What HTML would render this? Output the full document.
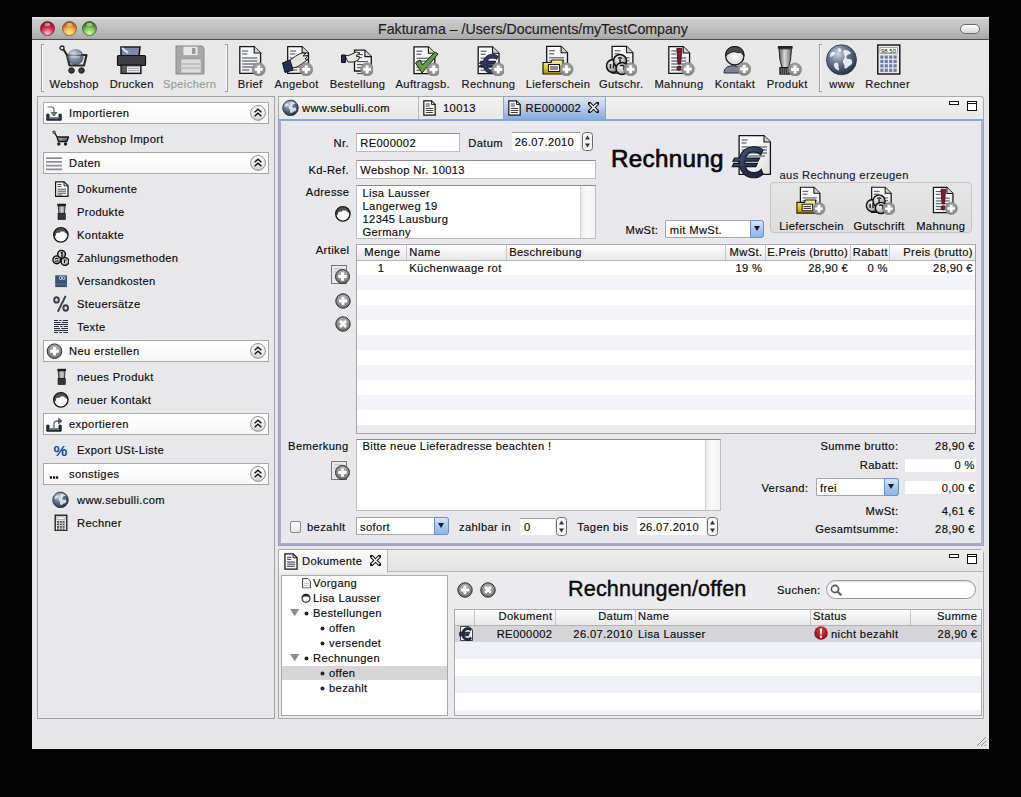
<!DOCTYPE html>
<html><head><meta charset="utf-8"><style>
*{box-sizing:border-box;margin:0;padding:0}
html,body{width:1021px;height:797px;overflow:hidden;background:#040404;font-family:"Liberation Sans",sans-serif;color:#141414}
.a{position:absolute}
.t{position:absolute;white-space:nowrap;line-height:1;-webkit-text-stroke:0.15px currentColor}
svg{overflow:visible}
</style></head><body>
<svg width="0" height="0" style="position:absolute"><defs>
<radialGradient id="g_red" cx="50%" cy="85%" r="75%"><stop offset="0" stop-color="#f8d0d8"/><stop offset=".55" stop-color="#e03050"/><stop offset="1" stop-color="#8a1020"/></radialGradient>
<radialGradient id="g_yel" cx="50%" cy="85%" r="75%"><stop offset="0" stop-color="#fff090"/><stop offset=".55" stop-color="#f0b040"/><stop offset="1" stop-color="#9a5a10"/></radialGradient>
<radialGradient id="g_grn" cx="50%" cy="85%" r="75%"><stop offset="0" stop-color="#e0f8c8"/><stop offset=".55" stop-color="#80c050"/><stop offset="1" stop-color="#3a6a20"/></radialGradient>
<linearGradient id="g_paper" x1="0" y1="0" x2="1" y2="1"><stop offset="0" stop-color="#ffffff"/><stop offset=".6" stop-color="#f2f2f2"/><stop offset="1" stop-color="#dcdcdc"/></linearGradient>
<radialGradient id="g_badge" cx="50%" cy="40%" r="60%"><stop offset="0" stop-color="#b4b4b4"/><stop offset="1" stop-color="#808080"/></radialGradient>
<radialGradient id="g_globe" cx="38%" cy="30%" r="72%"><stop offset="0" stop-color="#d0d8e4"/><stop offset=".45" stop-color="#6a7a94"/><stop offset="1" stop-color="#263046"/></radialGradient>
<radialGradient id="g_circ" cx="50%" cy="35%" r="65%"><stop offset="0" stop-color="#c4c4c4"/><stop offset="1" stop-color="#6a6a6a"/></radialGradient>
<linearGradient id="g_steel" x1="0" y1="0" x2="1" y2="0"><stop offset="0" stop-color="#5a5a5a"/><stop offset=".45" stop-color="#d8d8d8"/><stop offset="1" stop-color="#6a6a6a"/></linearGradient>
<linearGradient id="g_steel2" x1="0" y1="0" x2="1" y2="0"><stop offset="0" stop-color="#6a6a6a"/><stop offset=".5" stop-color="#d0d0d0"/><stop offset="1" stop-color="#8a8a8a"/></linearGradient>
<linearGradient id="g_euro" x1="0" y1="0" x2="1" y2="1"><stop offset="0" stop-color="#55607c"/><stop offset=".5" stop-color="#2e3a58"/><stop offset="1" stop-color="#1a2238"/></linearGradient>
<radialGradient id="g_coin" cx="40%" cy="35%" r="70%"><stop offset="0" stop-color="#f6f6f6"/><stop offset=".6" stop-color="#bcbcbc"/><stop offset="1" stop-color="#6a6a6a"/></radialGradient>
<linearGradient id="g_cart" x1="0" y1="0" x2="1" y2="1"><stop offset="0" stop-color="#f2f2f2"/><stop offset="1" stop-color="#4a4a4a"/></linearGradient>
<linearGradient id="g_folder" x1="0" y1="0" x2="0" y2="1"><stop offset="0" stop-color="#fff2a0"/><stop offset=".6" stop-color="#e8c020"/><stop offset="1" stop-color="#a88a10"/></linearGradient>
<radialGradient id="g_face" cx="50%" cy="55%" r="60%"><stop offset="0" stop-color="#ffffff"/><stop offset="1" stop-color="#c8c8c8"/></radialGradient>
<radialGradient id="g_redc" cx="50%" cy="35%" r="65%"><stop offset="0" stop-color="#e04040"/><stop offset="1" stop-color="#8a0a10"/></radialGradient>

<symbol id="tl_red" viewBox="0 0 15 15"><circle cx="7.5" cy="7.5" r="7" fill="url(#g_red)" stroke="#6a2030" stroke-width=".7"/><ellipse cx="7.5" cy="3.4" rx="3" ry="1.6" fill="#fff" opacity=".45"/></symbol>
<symbol id="tl_yel" viewBox="0 0 15 15"><circle cx="7.5" cy="7.5" r="7" fill="url(#g_yel)" stroke="#7a4a10" stroke-width=".7"/><ellipse cx="7.5" cy="3.4" rx="3" ry="1.6" fill="#fff" opacity=".45"/></symbol>
<symbol id="tl_grn" viewBox="0 0 15 15"><circle cx="7.5" cy="7.5" r="7" fill="url(#g_grn)" stroke="#2a5a1a" stroke-width=".7"/><ellipse cx="7.5" cy="3.4" rx="3" ry="1.6" fill="#fff" opacity=".45"/></symbol>

<!-- toolbar 32x32 -->
<symbol id="tb_cart" viewBox="0 0 32 32">
 <circle cx="4" cy="4" r="2" fill="none" stroke="#222" stroke-width="1.3"/>
 <path d="M5.5 5.5L9 11H28.5L26 21.5H11.5L9 11" fill="none" stroke="#2a2a2a" stroke-width="2.2" stroke-linejoin="round"/>
 <circle cx="17.5" cy="13" r="8" fill="url(#g_globe)" opacity=".75"/>
 <path d="M12 10h11M13 13h9" stroke="#d8e0ea" stroke-width="1.2" opacity=".8"/>
 <circle cx="13.5" cy="26.5" r="2.8" fill="#3a3a3a" stroke="#222"/><circle cx="23.5" cy="26.5" r="2.8" fill="#3a3a3a" stroke="#222"/>
</symbol>
<symbol id="tb_printer" viewBox="0 0 32 32">
 <path d="M5 3H24L23 12H5Z" fill="#8088a8" stroke="#1a1a1a" stroke-width="1.6"/>
 <path d="M6 4L12 9" stroke="#e0e6f4" stroke-width="2"/>
 <rect x="1.5" y="11.5" width="28" height="10" rx="1" fill="#3e3e44" stroke="#111" stroke-width="1.2"/>
 <rect x="5" y="21" width="20" height="8.5" fill="#5a5a62" stroke="#111" stroke-width="1.2"/>
 <rect x="11" y="22.5" width="13" height="6" fill="#e8e8ee"/>
 <path d="M12 24.5h11M12 26.5h11" stroke="#9a9aa8" stroke-width=".8"/>
</symbol>
<symbol id="tb_floppy" viewBox="0 0 32 32">
 <path d="M2 2H28L30 4V30H2Z" fill="#a8a8a8" stroke="#8a8a8a" stroke-width="1"/>
 <rect x="9" y="2.5" width="15" height="9" fill="#e8e8e8" stroke="#999" stroke-width=".6"/>
 <rect x="18" y="4" width="3.5" height="6" fill="#9a9a9a"/>
 <rect x="7" y="15" width="20" height="14" fill="#dcdcdc" stroke="#999" stroke-width=".6"/>
 <path d="M8 20H26M8 24H26" stroke="#a8a8a8" stroke-width="1"/>
</symbol>
<symbol id="tb_brief" viewBox="0 0 32 32"><g transform="translate(5.2,2)"><path d="M0.6 0.6H15L21.4 7V27.4H0.6Z" fill="url(#g_paper)" stroke="#151515" stroke-width="1.3"/><path d="M15 0.6V7H21.4" fill="#cfcfcf" stroke="#151515" stroke-width="1.1"/><path d="M3 5H9" stroke="#4a5262" stroke-width="1.1"/><path d="M3 8H8" stroke="#4a5262" stroke-width="1.1"/><path d="M3 12H18" stroke="#4a5262" stroke-width="1.1"/><path d="M3 15H18" stroke="#4a5262" stroke-width="1.1"/><path d="M3 18H18" stroke="#4a5262" stroke-width="1.1"/><path d="M3 21H16" stroke="#4a5262" stroke-width="1.1"/><path d="M3 24H10" stroke="#4a5262" stroke-width="1.1"/></g><circle cx="24.7" cy="25.4" r="6.6" fill="url(#g_badge)" stroke="#8a8a8a" stroke-width=".6"/><path d="M20.7 25.4H28.7M24.7 21.4V29.4" stroke="#fff" stroke-width="2.8"/></symbol>
<symbol id="tb_angebot" viewBox="0 0 32 32"><g transform="translate(6.1,2)"><path d="M0.6 0.6H15L21.4 7V27.4H0.6Z" fill="url(#g_paper)" stroke="#151515" stroke-width="1.3"/><path d="M15 0.6V7H21.4" fill="#cfcfcf" stroke="#151515" stroke-width="1.1"/><path d="M3 5H9" stroke="#4a5262" stroke-width="1.1"/><path d="M3 8H8" stroke="#4a5262" stroke-width="1.1"/><path d="M3 12H18" stroke="#4a5262" stroke-width="1.1"/><path d="M3 15H18" stroke="#4a5262" stroke-width="1.1"/><path d="M3 18H18" stroke="#4a5262" stroke-width="1.1"/><path d="M3 21H16" stroke="#4a5262" stroke-width="1.1"/><path d="M3 24H10" stroke="#4a5262" stroke-width="1.1"/></g>
 <path d="M8 17C12 14 17 10 21 9L25 9.5L22 12L27 11.5L24 15L27 15.5L22 19L16 23L11 24Z" fill="#e6e6e0" stroke="#222" stroke-width="1"/>
 <path d="M1.5 19L9 16L12 26L4 28.5Z" fill="#20305a" stroke="#111" stroke-width="1"/><circle cx="25.2" cy="25.4" r="6.6" fill="url(#g_badge)" stroke="#8a8a8a" stroke-width=".6"/><path d="M21.2 25.4H29.2M25.2 21.4V29.4" stroke="#fff" stroke-width="2.8"/></symbol>
<symbol id="tb_bestell" viewBox="0 0 32 32"><g transform="translate(12.9,5.6)"><path d="M0.6 0.6H11L17.4 7V21.4H0.6Z" fill="url(#g_paper)" stroke="#151515" stroke-width="1.3"/><path d="M11 0.6V7H17.4" fill="#cfcfcf" stroke="#151515" stroke-width="1.1"/><path d="M3 5H9" stroke="#4a5262" stroke-width="1.1"/><path d="M3 8H8" stroke="#4a5262" stroke-width="1.1"/><path d="M3 12H14" stroke="#4a5262" stroke-width="1.1"/><path d="M3 15H14" stroke="#4a5262" stroke-width="1.1"/><path d="M3 18H14" stroke="#4a5262" stroke-width="1.1"/><path d="M3 21H12" stroke="#4a5262" stroke-width="1.1"/><path d="M3 24H10" stroke="#4a5262" stroke-width="1.1"/></g>
 <path d="M4 12L9 11L15 8L19 9L15 12L19 13L17 16L13 18H7Z" fill="#e6e6e0" stroke="#222" stroke-width="1"/>
 <path d="M0.5 11H4.5V18.5H0.5Z" fill="#20305a" stroke="#111" stroke-width="1"/><circle cx="26.1" cy="25.4" r="6.6" fill="url(#g_badge)" stroke="#8a8a8a" stroke-width=".6"/><path d="M22.1 25.4H30.1M26.1 21.4V29.4" stroke="#fff" stroke-width="2.8"/></symbol>
<symbol id="tb_auftrag" viewBox="0 0 32 32"><g transform="translate(6.4,2.2)"><path d="M0.6 0.6H15L21.4 7V27.4H0.6Z" fill="url(#g_paper)" stroke="#151515" stroke-width="1.3"/><path d="M15 0.6V7H21.4" fill="#cfcfcf" stroke="#151515" stroke-width="1.1"/><path d="M3 5H9" stroke="#4a5262" stroke-width="1.1"/><path d="M3 8H8" stroke="#4a5262" stroke-width="1.1"/><path d="M3 12H18" stroke="#4a5262" stroke-width="1.1"/><path d="M3 15H18" stroke="#4a5262" stroke-width="1.1"/><path d="M3 18H18" stroke="#4a5262" stroke-width="1.1"/><path d="M3 21H16" stroke="#4a5262" stroke-width="1.1"/><path d="M3 24H10" stroke="#4a5262" stroke-width="1.1"/></g>
 <path d="M8.5 19L13 16L15.5 21L28 8L31 10L15 29Z" fill="#6a9a48" stroke="#1a2a10" stroke-width="1"/><circle cx="26.6" cy="25.5" r="6.6" fill="url(#g_badge)" stroke="#8a8a8a" stroke-width=".6"/><path d="M22.6 25.5H30.6M26.6 21.5V29.5" stroke="#fff" stroke-width="2.8"/></symbol>
<symbol id="tb_rechnung" viewBox="0 0 32 32"><g transform="translate(5.6,2.2)"><path d="M0.6 0.6H15L21.4 7V27.4H0.6Z" fill="url(#g_paper)" stroke="#151515" stroke-width="1.3"/><path d="M15 0.6V7H21.4" fill="#cfcfcf" stroke="#151515" stroke-width="1.1"/><path d="M3 5H9" stroke="#4a5262" stroke-width="1.1"/><path d="M3 8H8" stroke="#4a5262" stroke-width="1.1"/><path d="M3 12H18" stroke="#4a5262" stroke-width="1.1"/><path d="M3 15H18" stroke="#4a5262" stroke-width="1.1"/><path d="M3 18H18" stroke="#4a5262" stroke-width="1.1"/><path d="M3 21H16" stroke="#4a5262" stroke-width="1.1"/><path d="M3 24H10" stroke="#4a5262" stroke-width="1.1"/></g>
 <path d="M26 12.5C24.5 11 22.5 10.3 20.5 10.3C15.5 10.3 12 13.8 11.3 17.5H8.5L7.5 19.5H11.2V21H8L7 23H11.5C12.5 26.8 15.5 29.5 20 29.5C22.5 29.5 24.5 28.5 26 27L25 24C24 25.5 22.3 26.2 20.5 26.2C17.7 26.2 15.8 24.8 15.2 23H21.5L22.5 21H14.9V19.5H22.8L23.8 17.5H15.3C16 15.2 18 13.6 20.5 13.6C22.2 13.6 23.6 14.3 24.7 15.5Z" fill="#2a3a5e" stroke="#0e1424" stroke-width=".8"/><circle cx="26.2" cy="25.5" r="6.6" fill="url(#g_badge)" stroke="#8a8a8a" stroke-width=".6"/><path d="M22.2 25.5H30.2M26.2 21.5V29.5" stroke="#fff" stroke-width="2.8"/></symbol>
<symbol id="tb_liefer" viewBox="0 0 32 32"><g transform="translate(4.1,1.8)"><path d="M0.6 0.6H15L21.4 7V27.4H0.6Z" fill="url(#g_paper)" stroke="#151515" stroke-width="1.3"/><path d="M15 0.6V7H21.4" fill="#cfcfcf" stroke="#151515" stroke-width="1.1"/><path d="M3 5H9" stroke="#4a5262" stroke-width="1.1"/><path d="M3 8H8" stroke="#4a5262" stroke-width="1.1"/><path d="M3 12H18" stroke="#4a5262" stroke-width="1.1"/><path d="M3 15H18" stroke="#4a5262" stroke-width="1.1"/><path d="M3 18H18" stroke="#4a5262" stroke-width="1.1"/><path d="M3 21H16" stroke="#4a5262" stroke-width="1.1"/><path d="M3 24H10" stroke="#4a5262" stroke-width="1.1"/></g>
 <path d="M1 18.5H9L10 16H21V30H1Z" fill="url(#g_folder)" stroke="#1a1a1a" stroke-width="1.2"/>
 <rect x="6.5" y="20.5" width="11" height="7" fill="#f4f4f4" stroke="#111" stroke-width="1"/>
 <path d="M8 23H16M8 25H16" stroke="#111" stroke-width=".9"/><circle cx="24.5" cy="25.3" r="6.6" fill="url(#g_badge)" stroke="#8a8a8a" stroke-width=".6"/><path d="M20.5 25.3H28.5M24.5 21.3V29.3" stroke="#fff" stroke-width="2.8"/></symbol>
<symbol id="tb_gutschr" viewBox="0 0 32 32"><g transform="translate(6.5,1.8)"><path d="M0.6 0.6H15L21.4 7V27.4H0.6Z" fill="url(#g_paper)" stroke="#151515" stroke-width="1.3"/><path d="M15 0.6V7H21.4" fill="#cfcfcf" stroke="#151515" stroke-width="1.1"/><path d="M3 5H9" stroke="#4a5262" stroke-width="1.1"/><path d="M3 8H8" stroke="#4a5262" stroke-width="1.1"/><path d="M3 12H18" stroke="#4a5262" stroke-width="1.1"/><path d="M3 15H18" stroke="#4a5262" stroke-width="1.1"/><path d="M3 18H18" stroke="#4a5262" stroke-width="1.1"/><path d="M3 21H16" stroke="#4a5262" stroke-width="1.1"/><path d="M3 24H10" stroke="#4a5262" stroke-width="1.1"/></g>
 <circle cx="8" cy="22" r="6.5" fill="url(#g_coin)" stroke="#111" stroke-width="1.5"/>
 <circle cx="15" cy="17" r="6.5" fill="url(#g_coin)" stroke="#111" stroke-width="1.5"/>
 <circle cx="17" cy="24.5" r="6" fill="url(#g_coin)" stroke="#111" stroke-width="1.5"/>
 <path d="M13 14.5q2-1.5 4 0M15 15v5M5.5 20v4.5M8.5 19.5v5M15 22q2-1.5 4 0v4" fill="none" stroke="#1a1a1a" stroke-width="1.5"/><circle cx="25.6" cy="25.3" r="6.6" fill="url(#g_badge)" stroke="#8a8a8a" stroke-width=".6"/><path d="M21.6 25.3H29.6M25.6 21.3V29.3" stroke="#fff" stroke-width="2.8"/></symbol>
<symbol id="tb_mahnung" viewBox="0 0 32 32"><g transform="translate(5.2,2)"><path d="M0.6 0.6H15L21.4 7V27.4H0.6Z" fill="url(#g_paper)" stroke="#151515" stroke-width="1.3"/><path d="M15 0.6V7H21.4" fill="#cfcfcf" stroke="#151515" stroke-width="1.1"/><path d="M3 5H9" stroke="#4a5262" stroke-width="1.1"/><path d="M3 8H8" stroke="#4a5262" stroke-width="1.1"/><path d="M3 12H18" stroke="#4a5262" stroke-width="1.1"/><path d="M3 15H18" stroke="#4a5262" stroke-width="1.1"/><path d="M3 18H18" stroke="#4a5262" stroke-width="1.1"/><path d="M3 21H16" stroke="#4a5262" stroke-width="1.1"/><path d="M3 24H10" stroke="#4a5262" stroke-width="1.1"/></g>
 <path d="M13.8 4.5H18.8L17.6 20H15Z" fill="#8a1a2a" stroke="#2a0810" stroke-width=".8"/>
 <circle cx="16.3" cy="24.3" r="2.3" fill="#8a1a2a" stroke="#2a0810" stroke-width=".8"/><circle cx="24.8" cy="25" r="6.6" fill="url(#g_badge)" stroke="#8a8a8a" stroke-width=".6"/><path d="M20.8 25H28.8M24.8 21V29" stroke="#fff" stroke-width="2.8"/></symbol>
<symbol id="tb_kontakt" viewBox="0 0 32 32">
 <path d="M5 29C5 24.5 8 21.8 14 21.8C19.5 21.8 23 24.5 23 29Z" fill="#7c8498" stroke="#2a2e3a" stroke-width="1"/>
 <circle cx="15.8" cy="11.8" r="9.2" fill="url(#g_face)" stroke="#1a1a1a" stroke-width="1.3"/>
 <path d="M6.8 12C6.5 6 10 2.6 15.8 2.6C21.5 2.6 25.2 6 24.8 12C23 8.5 21 7.8 19 8.8C16 6.8 11 7.5 6.8 12Z" fill="#4a4a4a" stroke="#1a1a1a" stroke-width="1"/><circle cx="25.2" cy="25" r="6.6" fill="url(#g_badge)" stroke="#8a8a8a" stroke-width=".6"/><path d="M21.2 25H29.2M25.2 21V29" stroke="#fff" stroke-width="2.8"/></symbol>
<symbol id="tb_produkt" viewBox="0 0 32 32">
 <rect x="6.8" y="2" width="14.8" height="2.8" fill="#222"/>
 <path d="M8 4.8H20.5L19.5 16L17.5 23.5H11L9 16Z" fill="url(#g_steel)" stroke="#222" stroke-width="1"/>
 <rect x="8.8" y="23.4" width="10.5" height="6.8" fill="#3a3a3a" stroke="#111" stroke-width=".8"/>
 <path d="M10.5 24v6M12.5 24v6M14.5 24v6M16.5 24v6" stroke="#777" stroke-width=".7"/><circle cx="24" cy="25.5" r="6.6" fill="url(#g_badge)" stroke="#8a8a8a" stroke-width=".6"/><path d="M20 25.5H28M24 21.5V29.5" stroke="#fff" stroke-width="2.8"/></symbol>
<symbol id="tb_www" viewBox="0 0 32 32">
 <circle cx="15.5" cy="15.8" r="15" fill="url(#g_globe)" stroke="#2a3244" stroke-width=".8"/>
 <path d="M5 9C7 7 9.5 7.5 9 10C8 12 5.5 11.5 4.5 13.5C4 12 4.2 10.5 5 9ZM12 4.5C14 4 16 5 15 7C14 8.5 12 8 11.5 6.5ZM18 6C21 5.5 24 7 25 9.5C23 10.5 21.5 10 20.5 12C19.5 13.5 21 15.5 23 15C25 14.5 27 17 26 19.5C25 22 22.5 21.5 21.5 23.5C20.5 25 18 25 18.5 22.5C19 20.5 16.5 19.5 17 17C17.5 15 19.5 14 18.5 11.5C18 9.5 16.5 8 18 6ZM9 19C11 18 13 19.5 12.5 21.5C12 23.5 14 25 12.5 26.5C10.5 26 8.5 24 8 22C7.8 20.5 8 19.5 9 19Z" fill="#f2f5fa" opacity=".92"/>
</symbol>
<symbol id="tb_rechner" viewBox="0 0 32 32">
 <rect x="5.8" y="1" width="22" height="29" fill="#e8eaee" stroke="#111" stroke-width="1.4"/>
 <rect x="8" y="3.5" width="17.5" height="6" fill="#f8f8f8" stroke="#777" stroke-width=".6"/>
 <text x="24" y="8.6" font-size="6" text-anchor="end" font-family="Liberation Sans" fill="#222">98.50</text>
 <g fill="#5a6a96" opacity=".85"><rect x="8.3" y="11.5" width="3.2" height="3.2"/><rect x="12.700000000000001" y="11.5" width="3.2" height="3.2"/><rect x="17.1" y="11.5" width="3.2" height="3.2"/><rect x="21.5" y="11.5" width="3.2" height="3.2"/><rect x="8.3" y="15.9" width="3.2" height="3.2"/><rect x="12.700000000000001" y="15.9" width="3.2" height="3.2"/><rect x="17.1" y="15.9" width="3.2" height="3.2"/><rect x="21.5" y="15.9" width="3.2" height="3.2"/><rect x="8.3" y="20.3" width="3.2" height="3.2"/><rect x="12.700000000000001" y="20.3" width="3.2" height="3.2"/><rect x="17.1" y="20.3" width="3.2" height="3.2"/><rect x="21.5" y="20.3" width="3.2" height="3.2"/><rect x="8.3" y="24.700000000000003" width="3.2" height="3.2"/><rect x="12.700000000000001" y="24.700000000000003" width="3.2" height="3.2"/><rect x="17.1" y="24.700000000000003" width="3.2" height="3.2"/><rect x="21.5" y="24.700000000000003" width="3.2" height="3.2"/></g>
</symbol>

<!-- sidebar 17x17 / 18x16 -->
<symbol id="s_cart" viewBox="0 0 17 17"><circle cx="2" cy="2.2" r="1.2" fill="none" stroke="#111" stroke-width=".9"/><path d="M2.8 3L5 7H16.5L14.8 11.5H6.5L5 7" fill="url(#g_cart)" stroke="#1a1a1a" stroke-width="1.4" stroke-linejoin="round"/><circle cx="6.8" cy="14" r="1.7" fill="#222"/><circle cx="13.5" cy="14" r="1.7" fill="#222"/></symbol>
<symbol id="s_doc" viewBox="0 0 17 17"><path d="M3.6 1.8H12L16 5.8V16.4H3.6Z" fill="#fbfbfb" stroke="#151515" stroke-width="1.2"/><path d="M12 1.8V5.8H16Z" fill="#d0d0d0" stroke="#151515" stroke-width=".9"/><path d="M5.5 4.5h4M5.5 6.5h4M5.5 9.2h8.5M5.5 11.2h8.5M5.5 13.2h8.5M5.5 15h5" stroke="#3a3a3a" stroke-width=".9"/></symbol>
<symbol id="s_prod" viewBox="0 0 17 17"><rect x="5.3" y="0.8" width="8.7" height="2.1" fill="#1a1a1a"/><path d="M6.2 2.9H13.1L12.4 10.4H6.9Z" fill="url(#g_steel2)" stroke="#1a1a1a" stroke-width=".8"/><rect x="6" y="10.4" width="7.3" height="6.2" fill="#34343c" stroke="#111" stroke-width=".6"/></symbol>
<symbol id="s_face" viewBox="0 0 17 17"><circle cx="8.85" cy="8.85" r="7.2" fill="#fbfbfb"/><path d="M1.7 10.2A7.2 7.2 0 1 1 16 10L15 8.6L13.8 6.6L13 7.3L12.2 5.6L8.4 5.4L7.8 7.1L6.4 6.4L4.3 7.3L3.5 10.4Z" fill="#505050"/><circle cx="8.85" cy="8.85" r="7.2" fill="none" stroke="#121212" stroke-width="1.3"/></symbol>
<symbol id="s_coins" viewBox="0 0 17 17"><circle cx="4.8" cy="10.8" r="3.9" fill="url(#g_coin)" stroke="#111" stroke-width="1.4"/><circle cx="13" cy="12.5" r="3.9" fill="url(#g_coin)" stroke="#111" stroke-width="1.4"/><circle cx="9.5" cy="5.3" r="3.9" fill="url(#g_coin)" stroke="#111" stroke-width="1.4"/><path d="M8.6 4.2L10 3.2V7.8" fill="none" stroke="#111" stroke-width="1.3"/><path d="M3 10.2q1.6-1.5 3.2 0M3 12h3.5M11.5 11h3M12.5 11v3" fill="none" stroke="#111" stroke-width="1.1"/></symbol>
<symbol id="s_box" viewBox="0 0 17 17"><rect x="3.2" y="3.3" width="11.8" height="11.8" fill="#3c5272"/><path d="M3.2 12h11.8" stroke="#6a7c98" stroke-width=".6"/><rect x="7.5" y="4.5" width="2.4" height="3" rx="1" fill="none" stroke="#e8ecf4" stroke-width=".9"/><rect x="10.5" y="4.5" width="2.4" height="3" rx="1" fill="none" stroke="#e8ecf4" stroke-width=".9"/></symbol>
<symbol id="s_pct" viewBox="0 0 17 17"><ellipse cx="4.5" cy="4.9" rx="2.3" ry="2.7" fill="none" stroke="#3a3e4a" stroke-width="2"/><ellipse cx="13.7" cy="13" rx="2.3" ry="2.7" fill="none" stroke="#3a3e4a" stroke-width="2"/><path d="M13.6 1L5.8 16.7" stroke="#3a3e4a" stroke-width="1.9"/></symbol>
<symbol id="s_pctb" viewBox="0 0 17 17"><rect x="1" y="2.5" width="15" height="13" fill="#dbe8f6" opacity=".8"/><text x="8.5" y="15.2" font-size="15.5" font-weight="bold" text-anchor="middle" font-family="Liberation Sans" fill="#1e4a96">%</text></symbol>
<symbol id="s_text" viewBox="0 0 17 17"><path d="M2 2.5H6M7.3 2.5H9.5M10.8 2.5H16M2 4.5H8.5M9.8 4.5H16M2 6.5H16M2 8.5H7M8.3 8.5H10.5M11.8 8.5H16M2 10.5H8M9.3 10.5H16M2 12.5H16M2 14.5H6M7.3 14.5H10M11.3 14.5H16" stroke="#262c38" stroke-width="1"/></symbol>
<symbol id="s_globe" viewBox="0 0 17 17"><circle cx="8.5" cy="8.9" r="7.8" fill="url(#g_globe)" stroke="#1e2636" stroke-width=".7"/><path d="M3.5 5C5 4 6.5 4.5 6 6C5 7.5 3.5 7 3 8.5C2.5 7 2.8 6 3.5 5ZM8 3C10 2.5 12.5 3 13.5 4.5C12 5.5 11 5 10.5 6.5C9.5 7.5 11 9.5 12.5 8.5C14 8 15 10 14 11.5C13 13 11 12 10.5 13.5C9.5 14.5 7.5 14 8 12C8.5 10.5 6.5 10 7 8C7.5 6.5 9 6 8 3Z" fill="#e8eef6" opacity=".85"/></symbol>
<symbol id="s_calc" viewBox="0 0 17 17"><rect x="3.2" y="1.2" width="11.6" height="15.6" fill="#e4e4e4" stroke="#151515" stroke-width="1.3"/><rect x="5" y="3" width="8" height="2.5" fill="#fafafa" stroke="#777" stroke-width=".5"/><g fill="#555"><rect x="5.0" y="7.0" width="2" height="1.8"/><rect x="7.8" y="7.0" width="2" height="1.8"/><rect x="10.6" y="7.0" width="2" height="1.8"/><rect x="5.0" y="9.5" width="2" height="1.8"/><rect x="7.8" y="9.5" width="2" height="1.8"/><rect x="10.6" y="9.5" width="2" height="1.8"/><rect x="5.0" y="12.0" width="2" height="1.8"/><rect x="7.8" y="12.0" width="2" height="1.8"/><rect x="10.6" y="12.0" width="2" height="1.8"/><rect x="5.0" y="14.5" width="2" height="1.8"/><rect x="7.8" y="14.5" width="2" height="1.8"/><rect x="10.6" y="14.5" width="2" height="1.8"/></g></symbol>
<symbol id="h_import" viewBox="0 0 18 16"><path d="M0.8 9.2V15.2H15.2V9.2H13V12.8H3V9.2Z" fill="#303a52" stroke="#111" stroke-width=".9"/><path d="M3 13H13" stroke="#8a96b4" stroke-width="1.2"/><path d="M1.5 2H5.5C7.5 2 8 3.5 8 5V8" fill="none" stroke="#667" stroke-width="1.2"/><path d="M5 7.5H11L8 11Z" fill="#6a8a78" stroke="#333" stroke-width=".6"/></symbol>
<symbol id="h_export" viewBox="0 0 18 16"><path d="M0.8 9.2V15.2H15.2V9.2H13V12.8H3V9.2Z" fill="#303a52" stroke="#111" stroke-width=".9"/><path d="M3 13H13" stroke="#8a96b4" stroke-width="1.2"/><path d="M8 12V8C8 6 9.5 5 11.5 5H13" fill="none" stroke="#667" stroke-width="1.3"/><path d="M12.5 2L16 5L12.5 8Z" fill="#556" stroke="#333" stroke-width=".5"/></symbol>
<symbol id="h_daten" viewBox="0 0 18 16"><g stroke="#8c8e96" stroke-width="1.7"><path d="M0 3.2H16M0 6.9H16M0 10.6H16M0 14.3H16"/></g></symbol>
<symbol id="h_neu" viewBox="0 0 18 16"><circle cx="8.5" cy="8.2" r="7.3" fill="url(#g_circ)" stroke="#2e2e2e" stroke-width="1"/><path d="M4.2 8.2H12.8M8.5 3.9V12.5" stroke="#fff" stroke-width="3"/></symbol>
<symbol id="h_sonst" viewBox="0 0 18 16"><g fill="#111"><rect x="3.8" y="10.3" width="2.2" height="2.4"/><rect x="7" y="10.3" width="2.2" height="2.4"/><rect x="10" y="10.3" width="2.2" height="2.4"/></g></symbol>
<symbol id="collapse" viewBox="0 0 16 16"><defs><linearGradient id="g_col" x1="0" y1="0" x2="0" y2="1"><stop offset="0" stop-color="#fafafa"/><stop offset=".6" stop-color="#ececec"/><stop offset="1" stop-color="#cfcfcf"/></linearGradient></defs><circle cx="8" cy="7.9" r="7.4" fill="url(#g_col)" stroke="#8e8e8e" stroke-width="1"/><path d="M4.6 7.2L8 4.2L11.4 7.2M4.6 11.3L8 8.3L11.4 11.3" fill="none" stroke="#111" stroke-width="1.4"/></symbol>

<symbol id="tabdoc" viewBox="0 0 13 16"><path d="M0.8 0.8H8.5L12.2 4.5V15.2H0.8Z" fill="#fbfbfb" stroke="#151515" stroke-width="1.2"/><path d="M8.5 0.8V4.5H12.2Z" fill="#d0d0d0" stroke="#151515" stroke-width=".9"/><path d="M2.8 4h4M2.8 6h4M2.8 8.5h7.5M2.8 10.5h7.5M2.8 12.5h7" stroke="#2a2a2a" stroke-width=".9"/></symbol>
<symbol id="xclose" viewBox="0 0 11 11"><path d="M1.5 1.5L9.5 9.5M9.5 1.5L1.5 9.5" stroke="#111" stroke-width="3.6" stroke-linecap="square"/><path d="M1.8 1.8L9.2 9.2M9.2 1.8L1.8 9.2" stroke="#fff" stroke-width="1.6"/></symbol>
<symbol id="stepper" viewBox="0 0 11 19"><rect x="0.5" y="0.5" width="10" height="18" rx="3" fill="#f6f6f6" stroke="#6a6a6a"/><path d="M3 7.5L5.5 3.5L8 7.5ZM3 11.5L5.5 15.5L8 11.5Z" fill="#333"/></symbol>
<symbol id="docplus" viewBox="0 0 20 20"><rect x="0.5" y="0.5" width="15" height="18" fill="#e8e8e8" stroke="#777" stroke-width="1"/><path d="M3 4h9M3 7h9" stroke="#bbb"/><circle cx="11.5" cy="11.5" r="7" fill="url(#g_circ)" stroke="#2e2e2e" stroke-width="1"/><path d="M7.3 11.5H15.7M11.5 7.3V15.7" stroke="#fff" stroke-width="3"/></symbol>
<symbol id="circplus" viewBox="0 0 16 16"><circle cx="8" cy="8" r="7.2" fill="url(#g_circ)" stroke="#2e2e2e" stroke-width="1"/><path d="M3.8 8H12.2M8 3.8V12.2" stroke="#fff" stroke-width="2.8"/></symbol>
<symbol id="circx" viewBox="0 0 16 16"><circle cx="8" cy="8" r="7.2" fill="url(#g_circ)" stroke="#2e2e2e" stroke-width="1"/><path d="M5 5L11 11M11 5L5 11" stroke="#fff" stroke-width="2.6"/></symbol>
<symbol id="bigeuro" viewBox="0 0 42 46"><g transform="translate(7.5,2)"><path d="M0.6 0.6H25.5L31.9 7V39.4H0.6Z" fill="url(#g_paper)" stroke="#151515" stroke-width="1.3"/><path d="M25.5 0.6V7H31.9" fill="#cfcfcf" stroke="#151515" stroke-width="1.1"/><path d="M3 5H9" stroke="#4a5262" stroke-width="1.1"/><path d="M3 8H8" stroke="#4a5262" stroke-width="1.1"/><path d="M3 12H28.5" stroke="#4a5262" stroke-width="1.1"/><path d="M3 15H28.5" stroke="#4a5262" stroke-width="1.1"/><path d="M3 18H28.5" stroke="#4a5262" stroke-width="1.1"/><path d="M3 21H26.5" stroke="#4a5262" stroke-width="1.1"/><path d="M3 24H10" stroke="#4a5262" stroke-width="1.1"/></g>
 <g transform="translate(1.3,13.8) scale(1.116,1.07) translate(-9.5,-12)"><path d="M37 15C35 13 32 12 29 12C22 12 17 17 16 22.5H11.5L10 25.5H15.7V27.5H10.8L9.5 30.5H16.2C17.5 36.5 22 41 29 41C32.5 41 35 39.5 37 37.5L35.5 33C34 35 31.5 36 29 36C25 36 22 34 21.2 30.5H30.5L32 27.5H20.8V25.5H32.5L34 22.5H21.3C22.2 19 25 16.8 29 16.8C31.5 16.8 33.5 17.8 35 19.5Z" fill="url(#g_euro)" stroke="#0e1424" stroke-width="1"/></g></symbol>
<symbol id="tinydoc" viewBox="0 0 10 12"><path d="M0.6 0.6H6.5L9.4 3.5V11.4H0.6Z" fill="#fff" stroke="#222" stroke-width="1"/><path d="M2.5 6h5M2.5 8.5h5" stroke="#555" stroke-width=".8" stroke-dasharray="1 1"/></symbol>
<symbol id="tinyface" viewBox="0 0 11 12"><circle cx="5.5" cy="6.2" r="4.8" fill="#f4f4f4" stroke="#111" stroke-width="1.3"/><path d="M0.8 6C1 3 3 1.2 5.5 1.2C8 1.2 10 3 10.2 6C9 4.5 7.5 4 5.5 4.2C3.5 4 2 4.5 0.8 6Z" fill="#222"/></symbol>
<symbol id="smalleuro" viewBox="0 0 14 15"><path d="M1.5 0.5H10L13.5 4V14.5H1.5Z" fill="#f4f4f4" stroke="#333" stroke-width=".9"/><g transform="translate(0,1.5) scale(0.45) translate(-9.5,-12)"><path d="M37 15C35 13 32 12 29 12C22 12 17 17 16 22.5H11.5L10 25.5H15.7V27.5H10.8L9.5 30.5H16.2C17.5 36.5 22 41 29 41C32.5 41 35 39.5 37 37.5L35.5 33C34 35 31.5 36 29 36C25 36 22 34 21.2 30.5H30.5L32 27.5H20.8V25.5H32.5L34 22.5H21.3C22.2 19 25 16.8 29 16.8C31.5 16.8 33.5 17.8 35 19.5Z" fill="#1e2a48" stroke="#0e1424" stroke-width="1.5"/></g></symbol>
<symbol id="redexcl" viewBox="0 0 14 14"><circle cx="7" cy="7" r="6.8" fill="url(#g_redc)"/><path d="M5.8 2.5H8.2L7.7 8.5H6.3Z" fill="#fff"/><circle cx="7" cy="10.8" r="1.2" fill="#fff"/></symbol>
</defs></svg>
<div class="a" style="left:32px;top:17px;width:957px;height:732px;background:#e7e6e9"></div>
<div class="a" style="left:32px;top:17px;width:957px;height:23px;background:linear-gradient(#cdcdcd,#bdbdbd 50%,#a9a9a9);border-bottom:1px solid #4a4a4a;border-top:2px solid #dedede"></div>
<div class="t" style="left:378px;top:22.00px;font-size:14.2px;color:#1e1e1e;">Fakturama – /Users/Documents/myTestCompany</div>
<svg class="a" style="left:40.2px;top:21.2px;" width="15" height="15" viewBox="0 0 15 15"><use href="#tl_red"/></svg>
<svg class="a" style="left:61.5px;top:21.2px;" width="15" height="15" viewBox="0 0 15 15"><use href="#tl_yel"/></svg>
<svg class="a" style="left:82.4px;top:21.2px;" width="15" height="15" viewBox="0 0 15 15"><use href="#tl_grn"/></svg>
<div class="a" style="left:960px;top:24px;width:20px;height:10px;border:1px solid #6d6d6d;border-radius:5px;background:linear-gradient(#fdfdfd,#d8d8d8)"></div>
<div class="a" style="left:32px;top:40px;width:957px;height:55px;background:#e8e8e8"></div>
<div class="a" style="left:41px;top:44px;width:3px;height:48px;border-left:1px solid #9b9b9b;border-top:1px solid #9b9b9b;border-bottom:1px solid #9b9b9b;box-shadow:inset 1px 0 0 #fbfbfb"></div>
<div class="a" style="left:819px;top:44px;width:3px;height:48px;border-left:1px solid #9b9b9b;border-top:1px solid #9b9b9b;border-bottom:1px solid #9b9b9b;box-shadow:inset 1px 0 0 #fbfbfb"></div>
<div class="a" style="left:225px;top:44px;width:3px;height:48px;border-right:1px solid #9b9b9b;border-top:1px solid #9b9b9b;border-bottom:1px solid #9b9b9b;box-shadow:inset -1px 0 0 #fbfbfb"></div>
<div class="t" style="left:-225.82px;width:600px;text-align:center;top:79.00px;font-size:11.2px;color:#151515;letter-spacing:0.35px;">Webshop</div>
<svg class="a" style="left:58px;top:44px;" width="32" height="32" viewBox="0 0 32 32"><use href="#tb_cart"/></svg>
<div class="t" style="left:-168.32px;width:600px;text-align:center;top:79.00px;font-size:11.2px;color:#151515;letter-spacing:0.35px;">Drucken</div>
<svg class="a" style="left:115.5px;top:44px;" width="32" height="32" viewBox="0 0 32 32"><use href="#tb_printer"/></svg>
<div class="t" style="left:-110.33px;width:600px;text-align:center;top:79.00px;font-size:11.2px;color:#9a9a9a;letter-spacing:0.35px;">Speichern</div>
<svg class="a" style="left:173.5px;top:44px;" width="32" height="32" viewBox="0 0 32 32"><use href="#tb_floppy"/></svg>
<div class="t" style="left:-49.83px;width:600px;text-align:center;top:79.00px;font-size:11.2px;color:#151515;letter-spacing:0.35px;">Brief</div>
<svg class="a" style="left:234px;top:44px;" width="32" height="32" viewBox="0 0 32 32"><use href="#tb_brief"/></svg>
<div class="t" style="left:-3.33px;width:600px;text-align:center;top:79.00px;font-size:11.2px;color:#151515;letter-spacing:0.35px;">Angebot</div>
<svg class="a" style="left:280.5px;top:44px;" width="32" height="32" viewBox="0 0 32 32"><use href="#tb_angebot"/></svg>
<div class="t" style="left:57.57px;width:600px;text-align:center;top:79.00px;font-size:11.2px;color:#151515;letter-spacing:0.35px;">Bestellung</div>
<svg class="a" style="left:341.4px;top:44px;" width="32" height="32" viewBox="0 0 32 32"><use href="#tb_bestell"/></svg>
<div class="t" style="left:122.78px;width:600px;text-align:center;top:79.00px;font-size:11.2px;color:#151515;letter-spacing:0.35px;">Auftragsb.</div>
<svg class="a" style="left:406.6px;top:44px;" width="32" height="32" viewBox="0 0 32 32"><use href="#tb_auftrag"/></svg>
<div class="t" style="left:188.38px;width:600px;text-align:center;top:79.00px;font-size:11.2px;color:#151515;letter-spacing:0.35px;">Rechnung</div>
<svg class="a" style="left:472.2px;top:44px;" width="32" height="32" viewBox="0 0 32 32"><use href="#tb_rechnung"/></svg>
<div class="t" style="left:257.97px;width:600px;text-align:center;top:79.00px;font-size:11.2px;color:#151515;letter-spacing:0.35px;">Lieferschein</div>
<svg class="a" style="left:541.8px;top:44px;" width="32" height="32" viewBox="0 0 32 32"><use href="#tb_liefer"/></svg>
<div class="t" style="left:321.18px;width:600px;text-align:center;top:79.00px;font-size:11.2px;color:#151515;letter-spacing:0.35px;">Gutschr.</div>
<svg class="a" style="left:605px;top:44px;" width="32" height="32" viewBox="0 0 32 32"><use href="#tb_gutschr"/></svg>
<div class="t" style="left:378.97px;width:600px;text-align:center;top:79.00px;font-size:11.2px;color:#151515;letter-spacing:0.35px;">Mahnung</div>
<svg class="a" style="left:662.8px;top:44px;" width="32" height="32" viewBox="0 0 32 32"><use href="#tb_mahnung"/></svg>
<div class="t" style="left:434.97px;width:600px;text-align:center;top:79.00px;font-size:11.2px;color:#151515;letter-spacing:0.35px;">Kontakt</div>
<svg class="a" style="left:718.8px;top:44px;" width="32" height="32" viewBox="0 0 32 32"><use href="#tb_kontakt"/></svg>
<div class="t" style="left:487.18px;width:600px;text-align:center;top:79.00px;font-size:11.2px;color:#151515;letter-spacing:0.35px;">Produkt</div>
<svg class="a" style="left:771px;top:44px;" width="32" height="32" viewBox="0 0 32 32"><use href="#tb_produkt"/></svg>
<div class="t" style="left:541.97px;width:600px;text-align:center;top:79.00px;font-size:11.2px;color:#151515;letter-spacing:0.35px;">www</div>
<svg class="a" style="left:825.8px;top:44px;" width="32" height="32" viewBox="0 0 32 32"><use href="#tb_www"/></svg>
<div class="t" style="left:587.67px;width:600px;text-align:center;top:79.00px;font-size:11.2px;color:#151515;letter-spacing:0.35px;">Rechner</div>
<svg class="a" style="left:871.5px;top:44px;" width="32" height="32" viewBox="0 0 32 32"><use href="#tb_rechner"/></svg>
<div class="a" style="left:37px;top:96px;width:238px;height:623px;border:1px solid #a3a3a3;background:#e8e8ea"></div>
<div class="a" style="left:43px;top:102px;width:226px;height:22px;border:1px solid #a7a7a7;background:linear-gradient(#ffffff,#f7f7f7)"></div>
<div class="t" style="left:69px;top:108.00px;font-size:11.2px;color:#0a0a0a;letter-spacing:0.35px;">Importieren</div>
<svg class="a" style="left:46px;top:105px;" width="18" height="16" viewBox="0 0 18 16"><use href="#h_import"/></svg>
<svg class="a" style="left:250px;top:105px;" width="16" height="16" viewBox="0 0 16 16"><use href="#collapse"/></svg>
<div class="a" style="left:43px;top:152px;width:226px;height:22px;border:1px solid #a7a7a7;background:linear-gradient(#ffffff,#f7f7f7)"></div>
<div class="t" style="left:69px;top:158.00px;font-size:11.2px;color:#0a0a0a;letter-spacing:0.35px;">Daten</div>
<svg class="a" style="left:46px;top:155px;" width="18" height="16" viewBox="0 0 18 16"><use href="#h_daten"/></svg>
<svg class="a" style="left:250px;top:155px;" width="16" height="16" viewBox="0 0 16 16"><use href="#collapse"/></svg>
<div class="a" style="left:43px;top:340px;width:226px;height:22px;border:1px solid #a7a7a7;background:linear-gradient(#ffffff,#f7f7f7)"></div>
<div class="t" style="left:69px;top:346.00px;font-size:11.2px;color:#0a0a0a;letter-spacing:0.35px;">Neu erstellen</div>
<svg class="a" style="left:46px;top:343px;" width="18" height="16" viewBox="0 0 18 16"><use href="#h_neu"/></svg>
<svg class="a" style="left:250px;top:343px;" width="16" height="16" viewBox="0 0 16 16"><use href="#collapse"/></svg>
<div class="a" style="left:43px;top:413px;width:226px;height:22px;border:1px solid #a7a7a7;background:linear-gradient(#ffffff,#f7f7f7)"></div>
<div class="t" style="left:69px;top:419.00px;font-size:11.2px;color:#0a0a0a;letter-spacing:0.35px;">exportieren</div>
<svg class="a" style="left:46px;top:416px;" width="18" height="16" viewBox="0 0 18 16"><use href="#h_export"/></svg>
<svg class="a" style="left:250px;top:416px;" width="16" height="16" viewBox="0 0 16 16"><use href="#collapse"/></svg>
<div class="a" style="left:43px;top:463px;width:226px;height:22px;border:1px solid #a7a7a7;background:linear-gradient(#ffffff,#f7f7f7)"></div>
<div class="t" style="left:69px;top:469.00px;font-size:11.2px;color:#0a0a0a;letter-spacing:0.35px;">sonstiges</div>
<svg class="a" style="left:46px;top:466px;" width="18" height="16" viewBox="0 0 18 16"><use href="#h_sonst"/></svg>
<svg class="a" style="left:250px;top:466px;" width="16" height="16" viewBox="0 0 16 16"><use href="#collapse"/></svg>
<div class="t" style="left:77px;top:134.00px;font-size:11.2px;color:#0a0a0a;letter-spacing:0.35px;">Webshop Import</div>
<svg class="a" style="left:52px;top:130px;" width="17" height="17" viewBox="0 0 17 17"><use href="#s_cart"/></svg>
<div class="t" style="left:77px;top:184.00px;font-size:11.2px;color:#0a0a0a;letter-spacing:0.35px;">Dokumente</div>
<svg class="a" style="left:52px;top:180px;" width="17" height="17" viewBox="0 0 17 17"><use href="#s_doc"/></svg>
<div class="t" style="left:77px;top:207.00px;font-size:11.2px;color:#0a0a0a;letter-spacing:0.35px;">Produkte</div>
<svg class="a" style="left:52px;top:203px;" width="17" height="17" viewBox="0 0 17 17"><use href="#s_prod"/></svg>
<div class="t" style="left:77px;top:230.00px;font-size:11.2px;color:#0a0a0a;letter-spacing:0.35px;">Kontakte</div>
<svg class="a" style="left:52px;top:226px;" width="17" height="17" viewBox="0 0 17 17"><use href="#s_face"/></svg>
<div class="t" style="left:77px;top:253.00px;font-size:11.2px;color:#0a0a0a;letter-spacing:0.35px;">Zahlungsmethoden</div>
<svg class="a" style="left:52px;top:249px;" width="17" height="17" viewBox="0 0 17 17"><use href="#s_coins"/></svg>
<div class="t" style="left:77px;top:276.00px;font-size:11.2px;color:#0a0a0a;letter-spacing:0.35px;">Versandkosten</div>
<svg class="a" style="left:52px;top:272px;" width="17" height="17" viewBox="0 0 17 17"><use href="#s_box"/></svg>
<div class="t" style="left:77px;top:299.00px;font-size:11.2px;color:#0a0a0a;letter-spacing:0.35px;">Steuersätze</div>
<svg class="a" style="left:52px;top:295px;" width="17" height="17" viewBox="0 0 17 17"><use href="#s_pct"/></svg>
<div class="t" style="left:77px;top:322.00px;font-size:11.2px;color:#0a0a0a;letter-spacing:0.35px;">Texte</div>
<svg class="a" style="left:52px;top:318px;" width="17" height="17" viewBox="0 0 17 17"><use href="#s_text"/></svg>
<div class="t" style="left:77px;top:372.00px;font-size:11.2px;color:#0a0a0a;letter-spacing:0.35px;">neues Produkt</div>
<svg class="a" style="left:52px;top:368px;" width="17" height="17" viewBox="0 0 17 17"><use href="#s_prod"/></svg>
<div class="t" style="left:77px;top:395.00px;font-size:11.2px;color:#0a0a0a;letter-spacing:0.35px;">neuer Kontakt</div>
<svg class="a" style="left:52px;top:391px;" width="17" height="17" viewBox="0 0 17 17"><use href="#s_face"/></svg>
<div class="t" style="left:77px;top:445.00px;font-size:11.2px;color:#0a0a0a;letter-spacing:0.35px;">Export USt-Liste</div>
<svg class="a" style="left:52px;top:441px;" width="17" height="17" viewBox="0 0 17 17"><use href="#s_pctb"/></svg>
<div class="t" style="left:77px;top:495.00px;font-size:11.2px;color:#0a0a0a;letter-spacing:0.35px;">www.sebulli.com</div>
<svg class="a" style="left:52px;top:491px;" width="17" height="17" viewBox="0 0 17 17"><use href="#s_globe"/></svg>
<div class="t" style="left:77px;top:518.00px;font-size:11.2px;color:#0a0a0a;letter-spacing:0.35px;">Rechner</div>
<svg class="a" style="left:52px;top:514px;" width="17" height="17" viewBox="0 0 17 17"><use href="#s_calc"/></svg>
<div class="a" style="left:278px;top:96px;width:706px;height:25px;border:1px solid #a9a9a9;border-bottom:none;border-radius:0 4px 0 0;background:linear-gradient(#f2f2f2,#e6e6e6)"></div>
<div class="a" style="left:418px;top:97px;width:1px;height:22px;background:#b9b9b9"></div>
<div class="a" style="left:503px;top:97px;width:1px;height:22px;background:#b9b9b9"></div>
<div class="a" style="left:503px;top:96px;width:103px;height:25px;border:1px solid #9aa3b3;border-bottom:none;background:linear-gradient(#e2e7f0,#b9cbe8 45%,#7fa5de)"></div>
<div class="t" style="left:302px;top:103.00px;font-size:11.2px;color:#0a0a0a;letter-spacing:0.35px;">www.sebulli.com</div>
<svg class="a" style="left:282px;top:99px;" width="17" height="17" viewBox="0 0 17 17"><use href="#s_globe"/></svg>
<div class="t" style="left:443px;top:103.00px;font-size:11.2px;color:#0a0a0a;letter-spacing:0.35px;">10013</div>
<svg class="a" style="left:423px;top:100px;" width="13" height="16" viewBox="0 0 13 16"><use href="#tabdoc"/></svg>
<div class="t" style="left:525.5px;top:103.00px;font-size:11.2px;color:#0a0a0a;letter-spacing:0.35px;">RE000002</div>
<svg class="a" style="left:508px;top:100px;" width="13" height="16" viewBox="0 0 13 16"><use href="#tabdoc"/></svg>
<svg class="a" style="left:588px;top:102px;" width="11" height="11" viewBox="0 0 11 11"><use href="#xclose"/></svg>
<svg class="a" style="left:949px;top:101px;" width="10" height="4" viewBox="0 0 10 4"><rect x="0.5" y="0.5" width="9" height="3" fill="#fff" stroke="#111"/></svg>
<svg class="a" style="left:967px;top:101px;" width="10" height="10" viewBox="0 0 10 10"><rect x="0.5" y="0.5" width="9" height="9" fill="#fff" stroke="#111"/><line x1="1" y1="2.5" x2="9" y2="2.5" stroke="#111"/></svg>
<div class="a" style="left:278px;top:119px;width:706px;height:2px;background:#88a8d4"></div>
<div class="a" style="left:278px;top:121px;width:706px;height:425px;border:1px solid #a2a2b0;border-top:none;box-shadow:inset 2px 0 0 #a9a9d3,inset -2px 0 0 #a9b3d6,inset 0 -2px 0 #a9a9cf;background:#e8e7ec"></div>
<div class="t" style="right:672.15px;top:138.00px;font-size:11.2px;color:#0a0a0a;letter-spacing:0.35px;">Nr.</div>
<div class="a" style="left:356px;top:133px;width:104px;height:19px;background:#fff;border:1px solid #bdbdbd;border-top-color:#8c8c8c"></div>
<div class="t" style="left:360.3px;top:138.00px;font-size:11.2px;color:#0a0a0a;letter-spacing:0.35px;">RE000002</div>
<div class="t" style="left:468.3px;top:138.00px;font-size:11.2px;color:#0a0a0a;letter-spacing:0.35px;">Datum</div>
<div class="a" style="left:512px;top:132px;width:68px;height:19px;background:#fff;border-top:1px solid #9a9a9a"></div>
<div class="t" style="left:514.7px;top:137.00px;font-size:11.2px;color:#0a0a0a;letter-spacing:0.35px;">26.07.2010</div>
<svg class="a" style="left:582px;top:132px;" width="11" height="19" viewBox="0 0 11 19"><use href="#stepper"/></svg>
<div class="t" style="right:672.15px;top:165.00px;font-size:11.2px;color:#0a0a0a;letter-spacing:0.35px;">Kd-Ref.</div>
<div class="a" style="left:356px;top:160px;width:240px;height:19px;background:#fff;border:1px solid #bdbdbd;border-top-color:#8c8c8c"></div>
<div class="t" style="left:360.3px;top:165.00px;font-size:11.2px;color:#0a0a0a;letter-spacing:0.35px;">Webshop Nr. 10013</div>
<div class="t" style="right:671.65px;top:187.00px;font-size:11.2px;color:#0a0a0a;letter-spacing:0.35px;">Adresse</div>
<svg class="a" style="left:334px;top:205px;" width="17" height="17" viewBox="0 0 17 17"><use href="#s_face"/></svg>
<div class="a" style="left:356px;top:185px;width:240px;height:54px;background:#fff;border:1px solid #bdbdbd;border-top-color:#8c8c8c"></div>
<div class="a" style="left:580px;top:186px;width:15px;height:52px;background:linear-gradient(90deg,#ececec,#fafafa 40%,#f2f2f2);border-left:1px solid #d2d2d2"></div>
<div class="t" style="left:362.5px;top:188.00px;font-size:11.2px;color:#0a0a0a;letter-spacing:0.35px;">Lisa Lausser</div>
<div class="t" style="left:362.5px;top:201.00px;font-size:11.2px;color:#0a0a0a;letter-spacing:0.35px;">Langerweg 19</div>
<div class="t" style="left:362.5px;top:214.00px;font-size:11.2px;color:#0a0a0a;letter-spacing:0.35px;">12345 Lausburg</div>
<div class="t" style="left:362.5px;top:227.00px;font-size:11.2px;color:#0a0a0a;letter-spacing:0.35px;">Germany</div>
<div class="t" style="left:611px;top:147.00px;font-size:24.2px;color:#0a0a0a;-webkit-text-stroke:0.7px #0a0a0a;letter-spacing:0.3px">Rechnung</div>
<svg class="a" style="left:731px;top:133px;" width="42" height="46" viewBox="0 0 42 46"><use href="#bigeuro"/></svg>
<div class="t" style="left:779.5px;top:170.00px;font-size:11.2px;color:#222;letter-spacing:0.35px;">aus Rechnung erzeugen</div>
<div class="a" style="left:770px;top:182px;width:202px;height:51px;border:1px solid #c6c6c6;border-radius:4px;background:linear-gradient(#e6e6e6,#dddddd)"></div>
<div class="t" style="left:779.3px;top:221.00px;font-size:11.2px;color:#0a0a0a;letter-spacing:0.35px;">Lieferschein</div>
<div class="t" style="left:853.4px;top:221.00px;font-size:11.2px;color:#0a0a0a;letter-spacing:0.35px;">Gutschrift</div>
<div class="t" style="left:916.2px;top:221.00px;font-size:11.2px;color:#0a0a0a;letter-spacing:0.35px;">Mahnung</div>
<svg class="a" style="left:796px;top:185px;" width="30" height="30" viewBox="0 0 30 30"><use href="#tb_liefer"/></svg>
<svg class="a" style="left:865px;top:185px;" width="30" height="30" viewBox="0 0 30 30"><use href="#tb_gutschr"/></svg>
<svg class="a" style="left:928px;top:185px;" width="30" height="30" viewBox="0 0 30 30"><use href="#tb_mahnung"/></svg>
<div class="t" style="left:625.5px;top:225.00px;font-size:11.2px;color:#0a0a0a;letter-spacing:0.35px;">MwSt:</div>
<div class="a" style="left:665px;top:220px;width:99px;height:18px;background:#fff;border:1px solid #a6a6a6;border-radius:0 3px 3px 0"></div>
<div class="a" style="left:750px;top:220px;width:14px;height:18px;border:1px solid #6e8fbf;border-radius:0 3px 3px 0;background:linear-gradient(#d6e6f7,#a9c8ec 50%,#8db6e6)"></div>
<svg class="a" style="left:753px;top:225px;" width="8" height="7" viewBox="0 0 8 7"><path d="M1 1h6l-3 5z" fill="#121a2a"/></svg>
<div class="t" style="left:669.8px;top:225.00px;font-size:11.2px;color:#0a0a0a;letter-spacing:0.35px;">mit MwSt.</div>
<div class="t" style="right:671.65px;top:245.00px;font-size:11.2px;color:#0a0a0a;letter-spacing:0.35px;">Artikel</div>
<svg class="a" style="left:331px;top:265px;" width="20" height="20" viewBox="0 0 20 20"><use href="#docplus"/></svg>
<svg class="a" style="left:335px;top:293px;" width="16" height="16" viewBox="0 0 16 16"><use href="#circplus"/></svg>
<svg class="a" style="left:335px;top:316px;" width="16" height="16" viewBox="0 0 16 16"><use href="#circx"/></svg>
<div class="a" style="left:356px;top:244px;width:620px;height:190px;background:#fff;border:1px solid #a6a6a6"></div>
<div class="a" style="left:357px;top:275px;width:618px;height:15px;background:#f3f3f9"></div>
<div class="a" style="left:357px;top:305px;width:618px;height:15px;background:#f3f3f9"></div>
<div class="a" style="left:357px;top:335px;width:618px;height:15px;background:#f3f3f9"></div>
<div class="a" style="left:357px;top:365px;width:618px;height:15px;background:#f3f3f9"></div>
<div class="a" style="left:357px;top:395px;width:618px;height:15px;background:#f3f3f9"></div>
<div class="a" style="left:357px;top:425px;width:618px;height:8px;background:#ececf0"></div>
<div class="a" style="left:357px;top:245px;width:618px;height:16px;background:linear-gradient(#fefefe,#f1f1f1 50%,#e9e9e9);border-bottom:1px solid #b3b3b3"></div>
<div class="a" style="left:406px;top:245px;width:1px;height:15px;background:#c6c6c6"></div>
<div class="a" style="left:506px;top:245px;width:1px;height:15px;background:#c6c6c6"></div>
<div class="a" style="left:725px;top:245px;width:1px;height:15px;background:#c6c6c6"></div>
<div class="a" style="left:765px;top:245px;width:1px;height:15px;background:#c6c6c6"></div>
<div class="a" style="left:850px;top:245px;width:1px;height:15px;background:#c6c6c6"></div>
<div class="a" style="left:889px;top:245px;width:1px;height:15px;background:#c6c6c6"></div>
<div class="t" style="left:364.3px;top:247.00px;font-size:11.2px;color:#0a0a0a;letter-spacing:0.35px;">Menge</div>
<div class="t" style="left:409.3px;top:247.00px;font-size:11.2px;color:#0a0a0a;letter-spacing:0.35px;">Name</div>
<div class="t" style="left:509.2px;top:247.00px;font-size:11.2px;color:#0a0a0a;letter-spacing:0.35px;">Beschreibung</div>
<div class="t" style="right:258.65px;top:247.00px;font-size:11.2px;color:#0a0a0a;letter-spacing:0.35px;">MwSt.</div>
<div class="t" style="right:172.95px;top:247.00px;font-size:11.2px;color:#0a0a0a;letter-spacing:0.35px;">E.Preis (brutto)</div>
<div class="t" style="right:133.15px;top:247.00px;font-size:11.2px;color:#0a0a0a;letter-spacing:0.35px;">Rabatt</div>
<div class="t" style="right:48.15px;top:247.00px;font-size:11.2px;color:#0a0a0a;letter-spacing:0.35px;">Preis (brutto)</div>
<div class="t" style="right:636.65px;top:263.00px;font-size:11.2px;color:#0a0a0a;letter-spacing:0.35px;">1</div>
<div class="t" style="left:409.3px;top:263.00px;font-size:11.2px;color:#0a0a0a;letter-spacing:0.35px;">Küchenwaage rot</div>
<div class="t" style="right:258.65px;top:263.00px;font-size:11.2px;color:#0a0a0a;letter-spacing:0.35px;">19 %</div>
<div class="t" style="right:172.95px;top:263.00px;font-size:11.2px;color:#0a0a0a;letter-spacing:0.35px;">28,90 €</div>
<div class="t" style="right:133.15px;top:263.00px;font-size:11.2px;color:#0a0a0a;letter-spacing:0.35px;">0 %</div>
<div class="t" style="right:48.15px;top:263.00px;font-size:11.2px;color:#0a0a0a;letter-spacing:0.35px;">28,90 €</div>
<div class="t" style="left:288.1px;top:441.00px;font-size:11.2px;color:#0a0a0a;letter-spacing:0.35px;">Bemerkung</div>
<svg class="a" style="left:331px;top:461px;" width="20" height="20" viewBox="0 0 20 20"><use href="#docplus"/></svg>
<div class="a" style="left:356px;top:439px;width:365px;height:72px;background:#fff;border:1px solid #bdbdbd;border-top-color:#8c8c8c"></div>
<div class="a" style="left:705px;top:440px;width:15px;height:70px;background:linear-gradient(90deg,#ececec,#fafafa 40%,#f2f2f2);border-left:1px solid #d2d2d2"></div>
<div class="t" style="left:362.5px;top:441.00px;font-size:11.2px;color:#0a0a0a;letter-spacing:0.35px;">Bitte neue Lieferadresse beachten !</div>
<div class="a" style="left:290px;top:521px;width:11px;height:12px;background:linear-gradient(#fdfdfd,#e6e6e6);border:1px solid #8a8a8a;border-radius:2px"></div>
<div class="t" style="left:307px;top:522.00px;font-size:11.2px;color:#0a0a0a;letter-spacing:0.35px;">bezahlt</div>
<div class="a" style="left:356px;top:517px;width:93px;height:18px;background:#fff;border:1px solid #a6a6a6;border-radius:0 3px 3px 0"></div>
<div class="a" style="left:434px;top:517px;width:15px;height:18px;border:1px solid #6e8fbf;border-radius:0 3px 3px 0;background:linear-gradient(#d6e6f7,#a9c8ec 50%,#8db6e6)"></div>
<svg class="a" style="left:437px;top:522px;" width="8" height="7" viewBox="0 0 8 7"><path d="M1 1h6l-3 5z" fill="#121a2a"/></svg>
<div class="t" style="left:360px;top:522.00px;font-size:11.2px;color:#0a0a0a;letter-spacing:0.35px;">sofort</div>
<div class="t" style="left:459px;top:522.00px;font-size:11.2px;color:#0a0a0a;letter-spacing:0.35px;">zahlbar in</div>
<div class="a" style="left:520px;top:518px;width:35px;height:17px;background:#fff;border-top:1px solid #9a9a9a"></div>
<div class="t" style="left:524px;top:522.00px;font-size:11.2px;color:#0a0a0a;letter-spacing:0.35px;">0</div>
<svg class="a" style="left:556px;top:517px;" width="11" height="19" viewBox="0 0 11 19"><use href="#stepper"/></svg>
<div class="t" style="left:577.3px;top:522.00px;font-size:11.2px;color:#0a0a0a;letter-spacing:0.35px;">Tagen bis</div>
<div class="a" style="left:637px;top:517px;width:69px;height:18px;background:#fff;border-top:1px solid #9a9a9a"></div>
<div class="t" style="left:639.5px;top:522.00px;font-size:11.2px;color:#0a0a0a;letter-spacing:0.35px;">26.07.2010</div>
<svg class="a" style="left:707px;top:517px;" width="11" height="19" viewBox="0 0 11 19"><use href="#stepper"/></svg>
<div class="t" style="right:122.65px;top:441.00px;font-size:11.2px;color:#0a0a0a;letter-spacing:0.35px;">Summe brutto:</div>
<div class="t" style="right:46.15px;top:441.00px;font-size:11.2px;color:#0a0a0a;letter-spacing:0.35px;">28,90 €</div>
<div class="t" style="right:122.65px;top:460.00px;font-size:11.2px;color:#0a0a0a;letter-spacing:0.35px;">Rabatt:</div>
<div class="a" style="left:905px;top:459px;width:71px;height:13px;background:#fff"></div>
<div class="t" style="right:46.15px;top:460.00px;font-size:11.2px;color:#0a0a0a;letter-spacing:0.35px;">0 %</div>
<div class="t" style="right:212.65px;top:483.00px;font-size:11.2px;color:#0a0a0a;letter-spacing:0.35px;">Versand:</div>
<div class="a" style="left:816px;top:478px;width:83px;height:18px;background:#fff;border:1px solid #a6a6a6;border-radius:0 3px 3px 0"></div>
<div class="a" style="left:884px;top:478px;width:15px;height:18px;border:1px solid #6e8fbf;border-radius:0 3px 3px 0;background:linear-gradient(#d6e6f7,#a9c8ec 50%,#8db6e6)"></div>
<svg class="a" style="left:887px;top:483px;" width="8" height="7" viewBox="0 0 8 7"><path d="M1 1h6l-3 5z" fill="#121a2a"/></svg>
<div class="t" style="left:820px;top:483.00px;font-size:11.2px;color:#0a0a0a;letter-spacing:0.35px;">frei</div>
<div class="a" style="left:905px;top:481px;width:71px;height:13px;background:#fff"></div>
<div class="t" style="right:46.15px;top:483.00px;font-size:11.2px;color:#0a0a0a;letter-spacing:0.35px;">0,00 €</div>
<div class="t" style="right:122.65px;top:506.00px;font-size:11.2px;color:#0a0a0a;letter-spacing:0.35px;">MwSt:</div>
<div class="t" style="right:46.15px;top:506.00px;font-size:11.2px;color:#0a0a0a;letter-spacing:0.35px;">4,61 €</div>
<div class="t" style="right:122.65px;top:524.00px;font-size:11.2px;color:#0a0a0a;letter-spacing:0.35px;">Gesamtsumme:</div>
<div class="t" style="right:46.15px;top:524.00px;font-size:11.2px;color:#0a0a0a;letter-spacing:0.35px;">28,90 €</div>
<div class="a" style="left:278px;top:549px;width:706px;height:170px;border:1px solid #a9a9a9;border-radius:0 4px 0 0;background:#ebeaec"></div>
<div class="a" style="left:279px;top:550px;width:704px;height:22px;background:linear-gradient(#eeeeee,#e3e3e3);border-bottom:1px solid #b5b5b5"></div>
<div class="a" style="left:279px;top:550px;width:109px;height:23px;background:linear-gradient(#fafafa,#f1f1f1);border-right:1px solid #b9b9b9"></div>
<svg class="a" style="left:284px;top:553px;" width="14" height="17" viewBox="0 0 14 17"><use href="#tabdoc"/></svg>
<div class="t" style="left:302px;top:556.00px;font-size:11.2px;color:#0a0a0a;letter-spacing:0.35px;">Dokumente</div>
<svg class="a" style="left:370px;top:555px;" width="11" height="11" viewBox="0 0 11 11"><use href="#xclose"/></svg>
<svg class="a" style="left:949px;top:554px;" width="10" height="4" viewBox="0 0 10 4"><rect x="0.5" y="0.5" width="9" height="3" fill="#fff" stroke="#111"/></svg>
<svg class="a" style="left:967px;top:554px;" width="10" height="10" viewBox="0 0 10 10"><rect x="0.5" y="0.5" width="9" height="9" fill="#fff" stroke="#111"/><line x1="1" y1="2.5" x2="9" y2="2.5" stroke="#111"/></svg>
<div class="a" style="left:281px;top:575px;width:167px;height:141px;background:#fff;border:1px solid #a9a9a9"></div>
<div class="a" style="left:282px;top:666px;width:165px;height:14px;background:#d8d5d8"></div>
<svg class="a" style="left:301.5px;top:578px;" width="9" height="10.5" viewBox="0 0 9 10.5"><use href="#tinydoc"/></svg>
<div class="t" style="left:313px;top:578.00px;font-size:11.2px;color:#0a0a0a;letter-spacing:0.35px;">Vorgang</div>
<svg class="a" style="left:301px;top:593px;" width="10" height="10" viewBox="0 0 10 10"><use href="#tinyface"/></svg>
<div class="t" style="left:313px;top:593.00px;font-size:11.2px;color:#0a0a0a;letter-spacing:0.35px;">Lisa Lausser</div>
<svg class="a" style="left:290px;top:609.4px;" width="10" height="8" viewBox="0 0 10 8"><path d="M0 0h9.4l-4.7 7.2z" fill="#8c8c8c"/></svg>
<svg class="a" style="left:304px;top:610.9px;" width="5" height="5" viewBox="0 0 5 5"><circle cx="2.5" cy="2.5" r="2" fill="#222"/></svg>
<div class="t" style="left:313px;top:608.00px;font-size:11.2px;color:#0a0a0a;letter-spacing:0.35px;">Bestellungen</div>
<svg class="a" style="left:320px;top:625.9px;" width="5" height="5" viewBox="0 0 5 5"><circle cx="2.5" cy="2.5" r="2" fill="#222"/></svg>
<div class="t" style="left:329px;top:623.00px;font-size:11.2px;color:#0a0a0a;letter-spacing:0.35px;">offen</div>
<svg class="a" style="left:320px;top:640.9px;" width="5" height="5" viewBox="0 0 5 5"><circle cx="2.5" cy="2.5" r="2" fill="#222"/></svg>
<div class="t" style="left:329px;top:638.00px;font-size:11.2px;color:#0a0a0a;letter-spacing:0.35px;">versendet</div>
<svg class="a" style="left:290px;top:654.4px;" width="10" height="8" viewBox="0 0 10 8"><path d="M0 0h9.4l-4.7 7.2z" fill="#8c8c8c"/></svg>
<svg class="a" style="left:304px;top:655.9px;" width="5" height="5" viewBox="0 0 5 5"><circle cx="2.5" cy="2.5" r="2" fill="#222"/></svg>
<div class="t" style="left:313px;top:653.00px;font-size:11.2px;color:#0a0a0a;letter-spacing:0.35px;">Rechnungen</div>
<svg class="a" style="left:320px;top:670.9px;" width="5" height="5" viewBox="0 0 5 5"><circle cx="2.5" cy="2.5" r="2" fill="#222"/></svg>
<div class="t" style="left:329px;top:668.00px;font-size:11.2px;color:#0a0a0a;letter-spacing:0.35px;">offen</div>
<svg class="a" style="left:320px;top:685.9px;" width="5" height="5" viewBox="0 0 5 5"><circle cx="2.5" cy="2.5" r="2" fill="#222"/></svg>
<div class="t" style="left:329px;top:683.00px;font-size:11.2px;color:#0a0a0a;letter-spacing:0.35px;">bezahlt</div>
<svg class="a" style="left:457px;top:582px;" width="16" height="16" viewBox="0 0 16 16"><use href="#circplus"/></svg>
<svg class="a" style="left:480px;top:582px;" width="16" height="16" viewBox="0 0 16 16"><use href="#circx"/></svg>
<div class="t" style="left:568px;top:578.00px;font-size:21.6px;color:#0a0a0a;-webkit-text-stroke:0.4px #0a0a0a;letter-spacing:0.15px">Rechnungen/offen</div>
<div class="t" style="left:777px;top:585.00px;font-size:11.2px;color:#0a0a0a;letter-spacing:0.35px;">Suchen:</div>
<div class="a" style="left:826px;top:580px;width:150px;height:19px;background:#fff;border:1px solid #9a9a9a;border-radius:10px;box-shadow:inset 0 1px 2px rgba(0,0,0,.15)"></div>
<svg class="a" style="left:830px;top:584px;" width="12" height="12" viewBox="0 0 12 12"><circle cx="5" cy="5" r="3.6" fill="none" stroke="#555" stroke-width="1.6"/><path d="M7.6 7.6l3.2 3.2" stroke="#555" stroke-width="2" stroke-linecap="round"/></svg>
<div class="a" style="left:454px;top:609px;width:528px;height:107px;background:#fff;border:1px solid #a9a9a9"></div>
<div class="a" style="left:455px;top:642px;width:526px;height:17px;background:#eef1f7"></div>
<div class="a" style="left:455px;top:676px;width:526px;height:17px;background:#eef1f7"></div>
<div class="a" style="left:455px;top:710px;width:526px;height:5px;background:#eef1f7"></div>
<div class="a" style="left:455px;top:610px;width:526px;height:16px;background:linear-gradient(#fefefe,#f1f1f1 50%,#e9e9e9);border-bottom:1px solid #b3b3b3"></div>
<div class="a" style="left:474px;top:610px;width:1px;height:15px;background:#c6c6c6"></div>
<div class="a" style="left:555px;top:610px;width:1px;height:15px;background:#c6c6c6"></div>
<div class="a" style="left:635px;top:610px;width:1px;height:15px;background:#c6c6c6"></div>
<div class="a" style="left:810px;top:610px;width:1px;height:15px;background:#c6c6c6"></div>
<div class="a" style="left:910px;top:610px;width:1px;height:15px;background:#c6c6c6"></div>
<div class="a" style="left:455px;top:626px;width:526px;height:16px;background:#d5d5d9"></div>
<div class="t" style="right:468.65px;top:611.00px;font-size:11.2px;color:#0a0a0a;letter-spacing:0.35px;">Dokument</div>
<div class="t" style="right:388.15px;top:611.00px;font-size:11.2px;color:#0a0a0a;letter-spacing:0.35px;">Datum</div>
<div class="t" style="left:638px;top:611.00px;font-size:11.2px;color:#0a0a0a;letter-spacing:0.35px;">Name</div>
<div class="t" style="left:813px;top:611.00px;font-size:11.2px;color:#0a0a0a;letter-spacing:0.35px;">Status</div>
<div class="t" style="right:43.65px;top:611.00px;font-size:11.2px;color:#0a0a0a;letter-spacing:0.35px;">Summe</div>
<svg class="a" style="left:459px;top:626px;" width="14" height="15" viewBox="0 0 14 15"><use href="#smalleuro"/></svg>
<div class="t" style="right:468.65px;top:629.00px;font-size:11.2px;color:#0a0a0a;letter-spacing:0.35px;">RE000002</div>
<div class="t" style="right:388.15px;top:629.00px;font-size:11.2px;color:#0a0a0a;letter-spacing:0.35px;">26.07.2010</div>
<div class="t" style="left:638px;top:629.00px;font-size:11.2px;color:#0a0a0a;letter-spacing:0.35px;">Lisa Lausser</div>
<svg class="a" style="left:814px;top:626px;" width="14" height="14" viewBox="0 0 14 14"><use href="#redexcl"/></svg>
<div class="t" style="left:831px;top:629.00px;font-size:11.2px;color:#0a0a0a;letter-spacing:0.35px;">nicht bezahlt</div>
<div class="t" style="right:43.65px;top:629.00px;font-size:11.2px;color:#0a0a0a;letter-spacing:0.35px;">28,90 €</div>
<svg class="a" style="left:975px;top:735px;" width="12" height="12" viewBox="0 0 12 12"><path d="M11 2L2 11M11 6L6 11M11 9.5L9.5 11" stroke="#8c8c8c" stroke-width="1"/></svg>
</body></html>
